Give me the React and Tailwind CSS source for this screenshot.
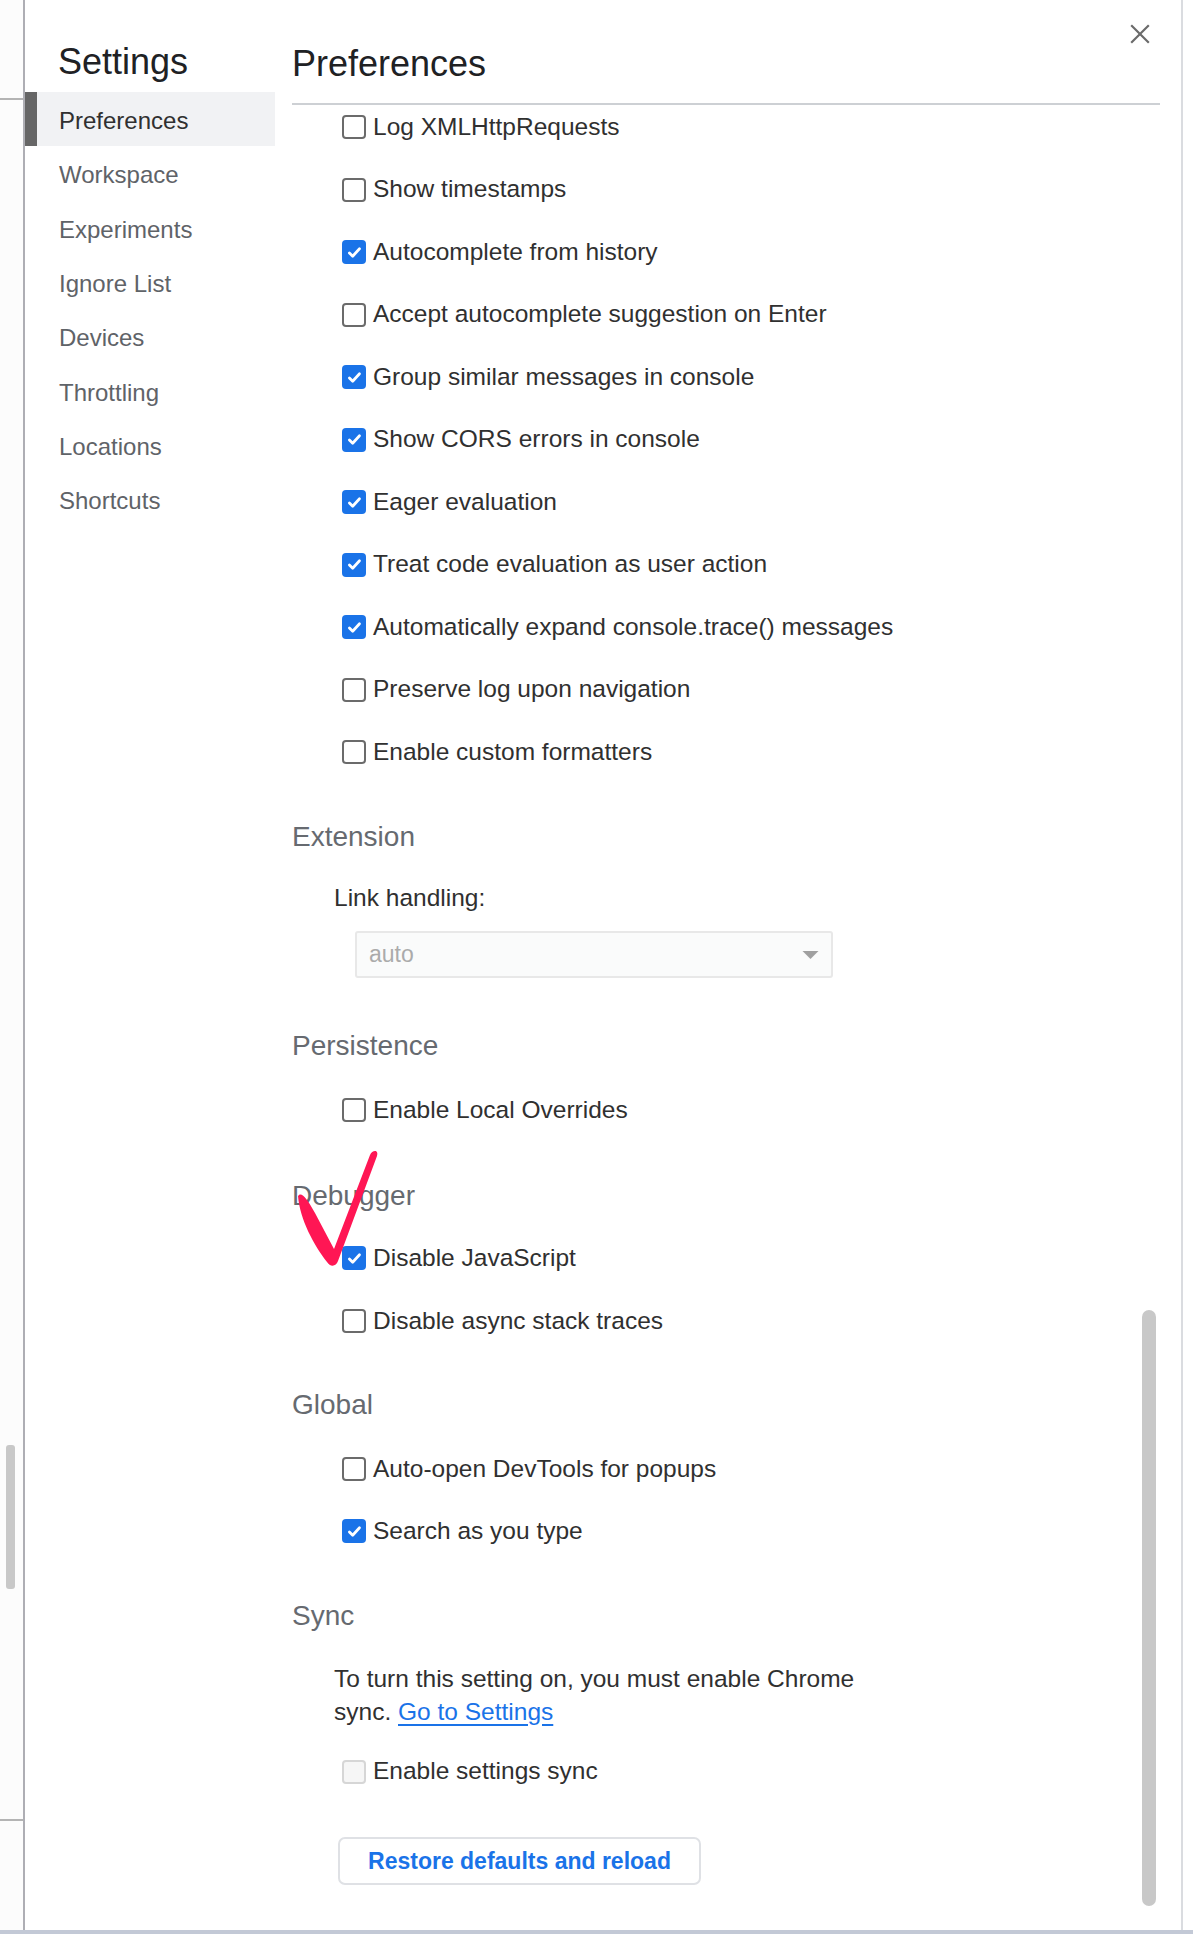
import React from 'react';

const navItems = ['Preferences', 'Workspace', 'Experiments', 'Ignore List', 'Devices', 'Throttling', 'Locations', 'Shortcuts'];

const consoleOptions = [
  { label: 'Log XMLHttpRequests', checked: false },
  { label: 'Show timestamps', checked: false },
  { label: 'Autocomplete from history', checked: true },
  { label: 'Accept autocomplete suggestion on Enter', checked: false },
  { label: 'Group similar messages in console', checked: true },
  { label: 'Show CORS errors in console', checked: true },
  { label: 'Eager evaluation', checked: true },
  { label: 'Treat code evaluation as user action', checked: true },
  { label: 'Automatically expand console.trace() messages', checked: true },
  { label: 'Preserve log upon navigation', checked: false },
  { label: 'Enable custom formatters', checked: false },
];

const Box = ({ checked, disabled }) => {
  if (checked) {
    return (
      <span className="w-[24px] h-[24px] shrink-0 rounded-[4px] bg-[#1a73e8] flex items-center justify-center">
        <svg viewBox="0 0 16 16" className="w-[17px] h-[17px]">
          <path d="M3.2 8.4l3.1 3.1 6.4-7" stroke="white" strokeWidth="2.6" fill="none" strokeLinecap="round" strokeLinejoin="round" />
        </svg>
      </span>
    );
  }
  return (
    <span
      className={
        disabled
          ? 'w-[24px] h-[24px] shrink-0 rounded-[4px] border-2 border-[#d6d6d6] bg-[#f6f6f6]'
          : 'w-[24px] h-[24px] shrink-0 rounded-[4px] border-2 border-[#6b6b6b] bg-white'
      }
    />
  );
};

const Row = ({ label, checked, disabled, className = '' }) => (
  <label className={`h-[44px] pl-[50px] flex items-center gap-[7px] text-[24.5px] text-[#303030] ${className}`}>
    <Box checked={checked} disabled={disabled} />
    <span>{label}</span>
  </label>
);

const SectionTitle = ({ children, className = '' }) => (
  <h3 className={`h-[44px] flex items-center text-[28px] text-[#666a70] ${className}`}>{children}</h3>
);

const App = () => {
  return (
    <div className="w-[1193px] h-[1934px] flex flex-col bg-white overflow-hidden font-['Liberation_Sans',Arial,sans-serif]">
      <div className="flex flex-1 min-h-0">
        {/* sliver of the page behind */}
        <div className="w-[23px] flex flex-col bg-[#fcfcfc]">
          <div className="h-[100px] border-b-2 border-[#b4b4b4]" />
          <div className="flex-1 pt-[1345px]">
            <div className="ml-[6px] w-[9px] h-[144px] rounded-[3px] bg-[#c8c8c8]" />
          </div>
          <div className="h-[111px] border-t-2 border-[#b4b4b4]" />
        </div>
        <div className="w-[2px] bg-[#aeaeb4]" />

        {/* settings dialog */}
        <div className="w-[1156px] flex">
          <aside className="w-[250px] flex flex-col">
            <div className="h-[92px] pt-[32px] pl-[33px] flex items-center text-[36px] text-[#202124]">Settings</div>
            {navItems.map((item, i) => (
              <div
                key={item}
                className={
                  i === 0
                    ? 'h-[54.3px] pt-[4px] flex items-center border-l-[12px] border-[#666666] bg-[#f1f2f4] pl-[22px] text-[24px] text-[#303030]'
                    : 'h-[54.3px] pt-[4px] flex items-center border-l-[12px] border-transparent pl-[22px] text-[24px] text-[#5f6368]'
                }
              >
                {item}
              </div>
            ))}
          </aside>

          <section className="flex-1 relative flex flex-col pl-[17px]">
            <header className="h-[105px] mr-[21px] flex items-start border-b-2 border-[#cdd0d4]">
              <h2 className="flex-1 mt-[42px] leading-[44px] text-[36px] text-[#202124]">Preferences</h2>
              <button className="mt-[21px] mr-[7px] w-[26px] h-[26px] flex items-center justify-center">
                <svg viewBox="0 0 20 20" className="w-[22px] h-[22px]">
                  <path d="M2 2L18 18M18 2L2 18" stroke="#6b6b6b" strokeWidth="2" />
                </svg>
              </button>
            </header>

            <div className="flex-1 overflow-hidden flex flex-col">
              {consoleOptions.map((o) => (
                <Row key={o.label} label={o.label} checked={o.checked} className="mb-[18.5px]" />
              ))}

              <SectionTitle className="mt-[22px]">Extension</SectionTitle>
              <div className="mt-[17.5px] h-[44px] pl-[42px] flex items-center text-[24.5px] text-[#303030]">Link handling:</div>
              <div className="mt-[11px] ml-[63px] w-[478px] h-[47px] rounded-[3px] border-2 border-[#e8e8e8] bg-[#fafbfb] flex items-center justify-between pl-[12px] pr-[12px]">
                <span className="text-[23px] text-[#ababab]">auto</span>
                <svg viewBox="0 0 16 8" className="w-[17px] h-[8px]">
                  <polygon points="0,0 16,0 8,8" fill="#a0a0a0" />
                </svg>
              </div>

              <SectionTitle className="mt-[46px]">Persistence</SectionTitle>
              <Row label="Enable Local Overrides" checked={false} className="mt-[20px]" />

              <SectionTitle className="mt-[41.5px]">Debugger</SectionTitle>
              <Row label="Disable JavaScript" checked className="mt-[18.5px]" />
              <Row label="Disable async stack traces" checked={false} className="mt-[19px]" />

              <SectionTitle className="mt-[40px]">Global</SectionTitle>
              <Row label="Auto-open DevTools for popups" checked={false} className="mt-[20px]" />
              <Row label="Search as you type" checked className="mt-[18px]" />

              <SectionTitle className="mt-[41px]">Sync</SectionTitle>
              <p className="mt-[23.5px] pl-[42px] leading-[33px] text-[24.5px] text-[#303030]">
                To turn this setting on, you must enable Chrome
                <br />
                sync. <a className="text-[#1a73e8] underline underline-offset-[4px]">Go to Settings</a>
              </p>
              <Row label="Enable settings sync" disabled className="mt-[22px]" />

              <button className="mt-[43.5px] ml-[46px] w-[363px] h-[48px] shrink-0 rounded-[7px] border-2 border-[#dfe1e5] bg-white text-[23px] font-bold text-[#1a73e8]">
                Restore defaults and reload
              </button>
            </div>

            {/* overlay scrollbar */}
            <div className="absolute right-[25px] top-[1310px] w-[14px] h-[596px] rounded-full bg-[#c8c8c8]" />

            {/* hand-drawn red check annotation */}
            <svg className="absolute left-[10px] top-[1140px] w-[100px] h-[130px] pointer-events-none" viewBox="0 0 100 130">
              <path
                d="M13 56 C16 51 22 58 30 73 L49 109 L85 15 C87 10 94 9 92 16 L53 121 C51 127 45 127 42 122 C29 105 15 80 13 56 Z"
                fill="#ff1654"
              />
            </svg>
          </section>
        </div>

        <div className="w-[2px] bg-[#dadce0]" />
        <div className="w-[10px] bg-white" />
      </div>
      <div className="h-[4px] bg-[#c3c9d6]" />
    </div>
  );
};

export default App;
